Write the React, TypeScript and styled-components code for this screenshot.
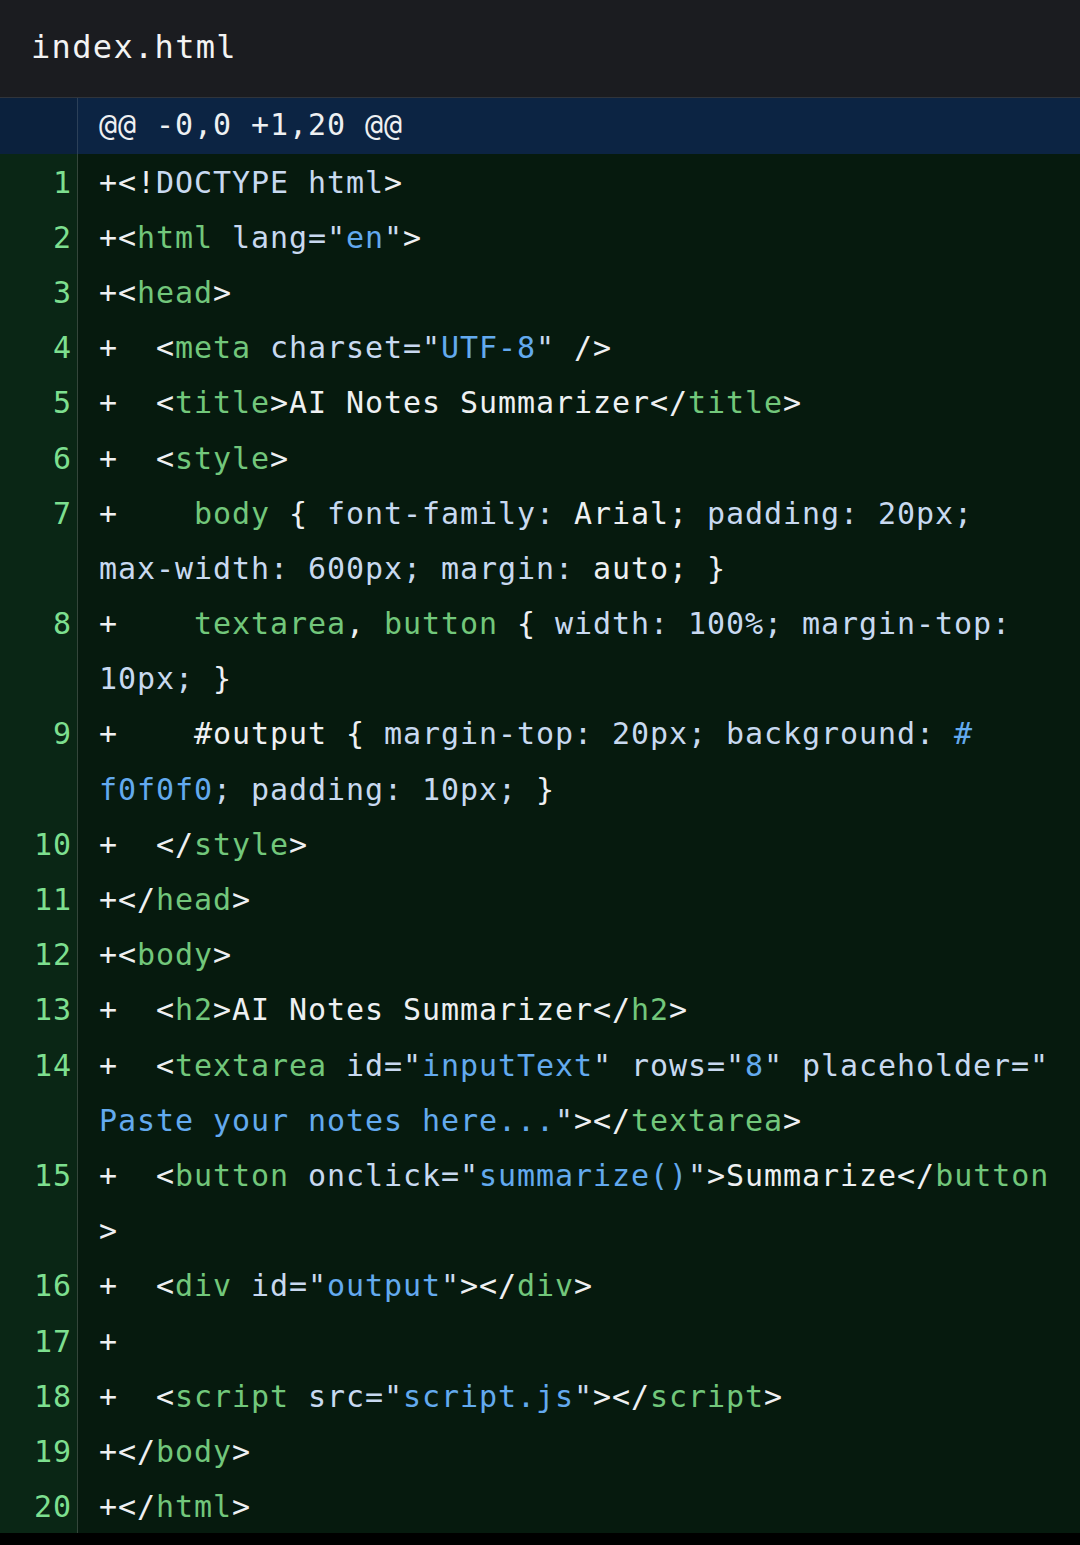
import React from "react";
import styled, { createGlobalStyle } from "styled-components";

const Global = createGlobalStyle`
  html, body { margin: 0; padding: 0; background: #000; }
  #root { min-height: 1545px; background: #000; }
`;

const MONO = `"DejaVu Sans Mono", "Liberation Mono", monospace`;

type Tok = "p" | "t" | "a" | "s";
type Seg = [Tok, string];
type Line = { n: number; rows: Seg[][] };

const colors: Record<Tok, string> = {
  p: "#eef0f2",
  t: "#72c77b",
  a: "#c8d9f0",
  s: "#63aaee",
};

const lines: Line[] = [
  { n: 1, rows: [[["p", "+<!"], ["a", "DOCTYPE html"], ["p", ">"]]] },
  { n: 2, rows: [[["p", "+<"], ["t", "html"], ["a", " lang=\""], ["s", "en"], ["a", "\""], ["p", ">"]]] },
  { n: 3, rows: [[["p", "+<"], ["t", "head"], ["p", ">"]]] },
  { n: 4, rows: [[["p", "+  <"], ["t", "meta"], ["a", " charset=\""], ["s", "UTF-8"], ["a", "\""], ["p", " />"]]] },
  { n: 5, rows: [[["p", "+  <"], ["t", "title"], ["p", ">AI Notes Summarizer</"], ["t", "title"], ["p", ">"]]] },
  { n: 6, rows: [[["p", "+  <"], ["t", "style"], ["p", ">"]]] },
  {
    n: 7,
    rows: [
      [["p", "+    "], ["t", "body"], ["p", " { "], ["a", "font-family:"], ["p", " Arial;"], ["a", " padding: 20px;"]],
      [["a", "max-width: 600px; margin:"], ["p", " auto; }"]],
    ],
  },
  {
    n: 8,
    rows: [
      [["p", "+    "], ["t", "textarea"], ["p", ", "], ["t", "button"], ["p", " { "], ["a", "width: 100%; margin-top:"]],
      [["a", "10px;"], ["p", " }"]],
    ],
  },
  {
    n: 9,
    rows: [
      [["p", "+    #output { "], ["a", "margin-top: 20px; background: "], ["s", "#"]],
      [["s", "f0f0f0"], ["a", "; padding: 10px;"], ["p", " }"]],
    ],
  },
  { n: 10, rows: [[["p", "+  </"], ["t", "style"], ["p", ">"]]] },
  { n: 11, rows: [[["p", "+</"], ["t", "head"], ["p", ">"]]] },
  { n: 12, rows: [[["p", "+<"], ["t", "body"], ["p", ">"]]] },
  { n: 13, rows: [[["p", "+  <"], ["t", "h2"], ["p", ">AI Notes Summarizer</"], ["t", "h2"], ["p", ">"]]] },
  {
    n: 14,
    rows: [
      [["p", "+  <"], ["t", "textarea"], ["a", " id=\""], ["s", "inputText"], ["a", "\" rows=\""], ["s", "8"], ["a", "\" placeholder=\""]],
      [["s", "Paste your notes here..."], ["a", "\""], ["p", "></"], ["t", "textarea"], ["p", ">"]],
    ],
  },
  {
    n: 15,
    rows: [
      [["p", "+  <"], ["t", "button"], ["a", " onclick=\""], ["s", "summarize()"], ["a", "\""], ["p", ">Summarize</"], ["t", "button"]],
      [["p", ">"]],
    ],
  },
  { n: 16, rows: [[["p", "+  <"], ["t", "div"], ["a", " id=\""], ["s", "output"], ["a", "\""], ["p", "></"], ["t", "div"], ["p", ">"]]] },
  { n: 17, rows: [[["p", "+"]]] },
  { n: 18, rows: [[["p", "+  <"], ["t", "script"], ["a", " src=\""], ["s", "script.js"], ["a", "\""], ["p", "></"], ["t", "script"], ["p", ">"]]] },
  { n: 19, rows: [[["p", "+</"], ["t", "body"], ["p", ">"]]] },
  { n: 20, rows: [[["p", "+</"], ["t", "html"], ["p", ">"]]] },
];

const Page = styled.div`
  width: 1080px;
  display: flex;
  flex-direction: column;
  background: #000;
  padding-bottom: 12px;
`;

const FileHeader = styled.header`
  height: 97px;
  line-height: 94px;
  background: #1b1c20;
  border-bottom: 1px solid #30343b;
  padding-left: 31px;
  font-family: ${MONO};
  font-size: 32px;
  letter-spacing: 1.33px;
  color: #f3f3f3;
  white-space: pre;
`;

const Diff = styled.div`
  display: flex;
  flex-direction: column;
`;

const LineRow = styled.div<{ $kind: "hunk" | "add" }>`
  display: flex;
  background: ${(p) => (p.$kind === "hunk" ? "#0c2443" : "#061a0e")};
`;

const Gutter = styled.div<{ $kind: "hunk" | "add" }>`
  width: 78px;
  flex: none;
  box-sizing: border-box;
  border-right: 1px solid ${(p) => (p.$kind === "hunk" ? "#2c4058" : "#34463b")};
  background: ${(p) => (p.$kind === "hunk" ? "#0b213d" : "#0a2615")};
  text-align: right;
  padding-right: 5px;
  font-family: ${MONO};
  font-size: 30px;
  letter-spacing: 0.94px;
  color: #7ddf8f;
  padding-top: 2px;
  line-height: 53.2px;
  white-space: pre;
`;

const CodeCol = styled.div`
  flex: 1;
  padding-left: 21px;
  display: flex;
  flex-direction: column;
`;

const CodeRow = styled.div`
  height: 55.2px;
  box-sizing: border-box;
  padding-top: 2px;
  line-height: 53.2px;
  font-family: ${MONO};
  font-size: 30px;
  letter-spacing: 0.94px;
  white-space: pre;
`;

const HunkText = styled.div`
  height: 55.5px;
  line-height: 54px;
  font-family: ${MONO};
  font-size: 30px;
  letter-spacing: 0.94px;
  white-space: pre;
  color: #eef0f2;
`;

const Token = styled.span<{ $t: Tok }>`
  color: ${(p) => colors[p.$t]};
`;

export default function App() {
  return (
    <>
      <Global />
      <Page>
        <FileHeader>index.html</FileHeader>
        <Diff>
          <LineRow $kind="hunk">
            <Gutter $kind="hunk" />
            <CodeCol>
              <HunkText>@@ -0,0 +1,20 @@</HunkText>
            </CodeCol>
          </LineRow>
          {lines.map((line) => (
            <LineRow $kind="add" key={line.n}>
              <Gutter $kind="add">{line.n}</Gutter>
              <CodeCol>
                {line.rows.map((row, i) => (
                  <CodeRow key={i}>
                    {row.map(([t, s], j) => (
                      <Token $t={t} key={j}>
                        {s}
                      </Token>
                    ))}
                  </CodeRow>
                ))}
              </CodeCol>
            </LineRow>
          ))}
        </Diff>
      </Page>
    </>
  );
}
